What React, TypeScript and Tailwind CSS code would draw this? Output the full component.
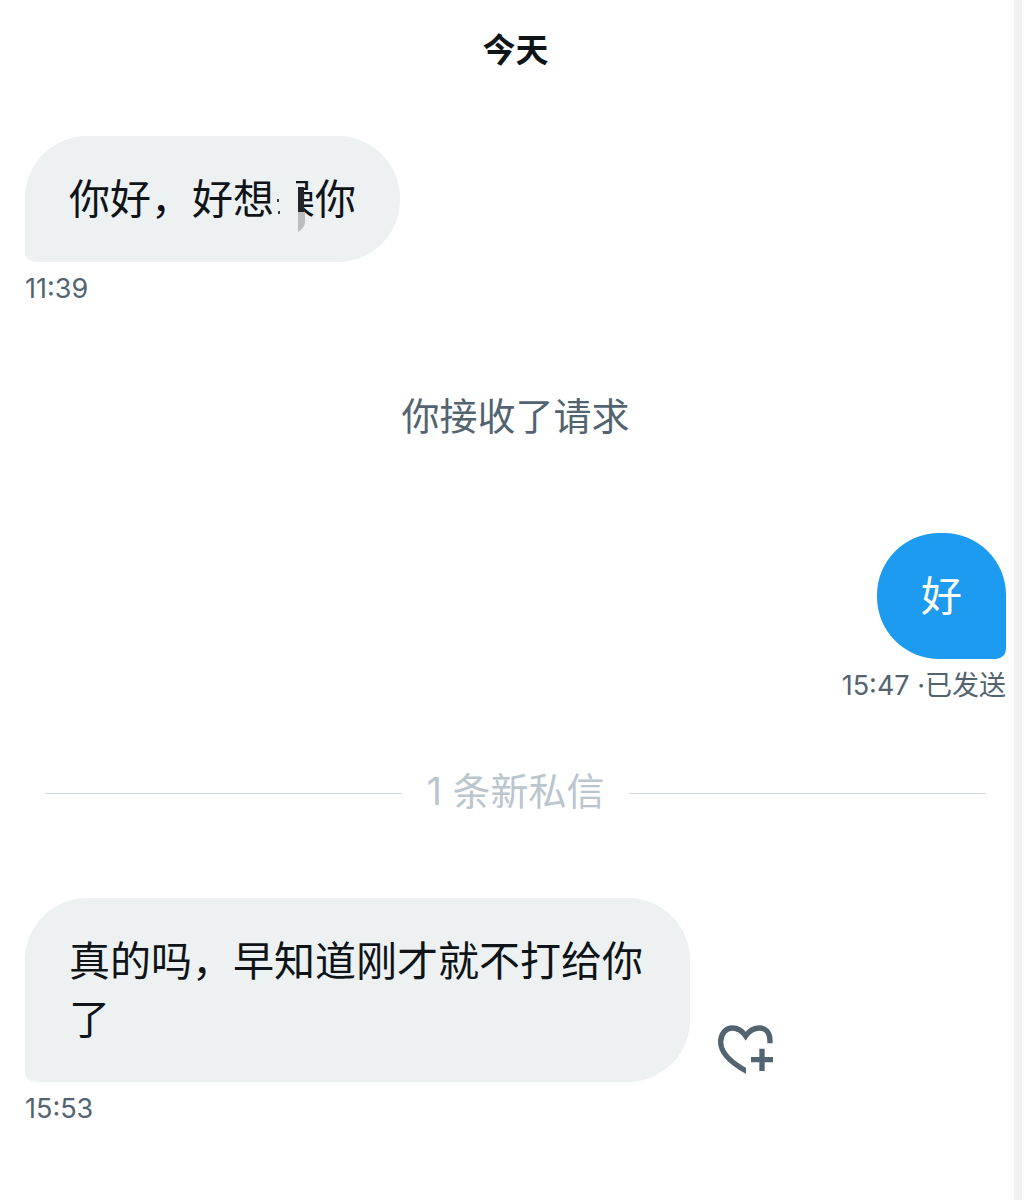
import type { ReactNode } from "react";
import clsx from "clsx";

function Bubble({ own = false, children }: { own?: boolean; children: ReactNode }) {
  return (
    <div
      className={clsx(
        "px-11 py-[34px] rounded-[62px] text-[41px] leading-[58px]",
        own ? "bg-[#1d9bf0] text-white rounded-br-[10px]" : "bg-[#edf1f2] text-[#0f1419] rounded-bl-[10px]"
      )}
    >
      {children}
    </div>
  );
}

/* Character with its left part rubbed out */
function SmudgedChar({ char }: { char: string }) {
  return (
    <span className="relative inline-block">
      {char}
      <svg viewBox="0 0 41 58" className="absolute inset-0 w-full h-full overflow-visible" aria-hidden="true">
        <path d="M0 0H22V14H25V58H0Z" fill="#edf1f2" />
        <path d="M3 29h2v3h-2zM4 41h2v3h-2z" fill="#3a4045" />
        <path d="M24 17H30V42H24Z" fill="#22262a" />
        <path d="M24 42H31V53C30 57 28 60 24 62Z" fill="#bbbdbf" />
      </svg>
    </span>
  );
}

function HeartPlus() {
  return (
    <svg viewBox="0 0 168 147" className="w-14 h-auto" fill="none" stroke="#536471" strokeWidth="16" aria-hidden="true">
      <clipPath id="heart-cut">
        <path d="M0 0H168V55H84V147H0Z" />
      </clipPath>
      <path
        clipPath="url(#heart-cut)"
        d="M156 60V48C156 24 144 9 125 9C107 9 93 18 83 33C73 18 61 9 43 9C23 9 8 27 8 51C8 84 38 114 94 143"
      />
      <path d="M99 104H165M132 71V138" />
    </svg>
  );
}

function Meta({ children }: { children: ReactNode }) {
  return <p className="mt-2 text-[27px] leading-[38px] text-[#536471]">{children}</p>;
}

export default function App() {
  return (
    <div className="min-h-screen flex bg-white font-['Inter','Noto_Sans_CJK_SC',sans-serif]">
      <main className="flex-1 flex flex-col pl-[25px] pr-2 pt-[26px] pb-10">
        <h2 className="text-center text-[33px] leading-[48px] font-bold text-[#0f1419]">今天</h2>

        <section className="mt-[62px] flex flex-col items-start">
          <Bubble>
            你好，好想
            <SmudgedChar char="操" />你
          </Bubble>
          <Meta>11:39</Meta>
        </section>

        <p className="mt-20 text-center text-[38px] leading-[56px] text-[#536471]">你接收了请求</p>

        <section className="mt-[89px] flex flex-col items-end">
          <Bubble own>好</Bubble>
          <Meta>15:47 ·已发送</Meta>
        </section>

        <div className="mt-[58px] mx-5 flex items-center gap-6 text-[38px] leading-[56px] text-[#b9c6cd]">
          <span className="flex-1 h-px mt-1 bg-[#d3dadd]" />
          <span>1 条新私信</span>
          <span className="flex-1 h-px mt-1 bg-[#d3dadd]" />
        </div>

        <section className="mt-[79px] flex flex-col items-start">
          <div className="flex items-end gap-7">
            <div className="max-w-[665px]">
              <Bubble>真的吗，早知道刚才就不打给你了</Bubble>
            </div>
            <button type="button" aria-label="添加心情" className="mb-2 shrink-0">
              <HeartPlus />
            </button>
          </div>
          <Meta>15:53</Meta>
        </section>
      </main>
      <div className="w-2 mr-[3px] bg-[#f1f1f2]" />
    </div>
  );
}
